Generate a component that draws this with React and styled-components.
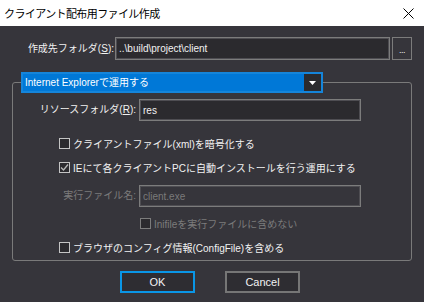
import React from 'react';
import styled, {createGlobalStyle} from 'styled-components';

const FONT = `"Liberation Sans", "Noto Sans CJK JP", sans-serif`;

const GlobalStyle = createGlobalStyle`
    html, body {
        margin: 0;
        padding: 0;
        background: #36353b;
    }
    body {
        font-family: ${FONT};
    }
`

function CheckRow({checked, disabled, indent, children}) {
    return (
        <CheckLine $indent={indent} $disabled={disabled}>
            <Box $disabled={disabled}>
                {checked &&
                    <svg width="9" height="9" viewBox="0 0 9 9">
                        <polyline points="1,4.5 3.5,7 8,1.5" fill="none" stroke="#b8b8b8" strokeWidth="1.3"/>
                    </svg>
                }
            </Box>
            <span>{children}</span>
        </CheckLine>
    )
}

function App() {
    return (
        <Window>
            <GlobalStyle/>
            <TitleBar>
                <Title>クライアント配布用ファイル作成</Title>
                <CloseButton>
                    <svg width="11" height="11" viewBox="0 0 11 11">
                        <path d="M0.5 0.5 L10.5 10.5 M10.5 0.5 L0.5 10.5" stroke="#000" strokeWidth="1"/>
                    </svg>
                </CloseButton>
            </TitleBar>

            <Body>
                <TopRow>
                    <TopLabel>作成先フォルダ(<u>S</u>):</TopLabel>
                    <TextBox value="..\build\project\client" readOnly/>
                    <BrowseButton>...</BrowseButton>
                </TopRow>

                <Group>
                    <Legend>
                        <LegendText>Internet Explorerで運用する</LegendText>
                        <ArrowBox>
                            <svg width="7" height="4" viewBox="0 0 7 4">
                                <polygon points="0,0 7,0 3.5,4" fill="#fff"/>
                            </svg>
                        </ArrowBox>
                    </Legend>

                    <FieldRow $top={6}>
                        <FieldLabel>リソースフォルダ(<u>R</u>):</FieldLabel>
                        <TextBox value="res" readOnly/>
                    </FieldRow>

                    <Checks $top={10}>
                        <CheckRow indent={46}>クライアントファイル(xml)を暗号化する</CheckRow>
                        <CheckRow indent={46} checked>IEにて各クライアントPCに自動インストールを行う運用にする</CheckRow>
                    </Checks>

                    <FieldRow $top={6}>
                        <FieldLabel $disabled>実行ファイル名:</FieldLabel>
                        <TextBox value="client.exe" readOnly disabled/>
                    </FieldRow>

                    <Checks $top={4}>
                        <CheckRow indent={127} disabled>Inifileを実行ファイルに含めない</CheckRow>
                        <CheckRow indent={46}>ブラウザのコンフィグ情報(ConfigFile)を含める</CheckRow>
                    </Checks>
                </Group>

                <Buttons>
                    <DialogButton $primary>OK</DialogButton>
                    <DialogButton>Cancel</DialogButton>
                </Buttons>
            </Body>
        </Window>
    );
}

const Window = styled.div`
    width: 424px;
    height: 302px;
    display: flex;
    flex-direction: column;
    background: #36353b;
    color: #f2f2f2;
    font-size: 10px;
    overflow: hidden;
`

const TitleBar = styled.div`
    height: 26px;
    flex-shrink: 0;
    display: flex;
    align-items: center;
    justify-content: space-between;
    padding-left: 4px;
    background: #ffffff;
    color: #000;
`

const Title = styled.span`
    font-size: 11px;
    letter-spacing: -0.6px;
`

const CloseButton = styled.div`
    width: 32px;
    height: 26px;
    display: flex;
    align-items: center;
    justify-content: center;
`

const Body = styled.div`
    display: flex;
    flex-direction: column;
    padding: 11px 12px 0 12px;
`

const TopRow = styled.div`
    display: flex;
    height: 23px;
    gap: 1px;
`

const TopLabel = styled.label`
    width: 102px;
    text-align: right;
    line-height: 23px;
    white-space: nowrap;
`

const TextBox = styled.input`
    flex: 1;
    min-width: 0;
    box-sizing: border-box;
    height: 100%;
    margin: 0;
    padding: 0 3px;
    border: 1px solid #7c7c7c;
    box-shadow: inset 0 0 0 1px #4e4d52;
    background: ${p => p.disabled ? '#36353b' : '#2b2a2e'};
    color: ${p => p.disabled ? '#7a7a7a' : '#f2f2f2'};
    font-family: ${FONT};
    font-size: 10px;
    outline: none;
`

const BrowseButton = styled.div`
    width: 20px;
    margin-left: 1px;
    box-sizing: border-box;
    border: 1px solid #7c7c7c;
    display: flex;
    align-items: center;
    justify-content: center;
    padding-top: 3px;
    font-size: 9px;
    letter-spacing: -0.5px;
`

const Group = styled.fieldset`
    margin: 12px 0 0 0;
    padding: 0 0 1px 0;
    min-width: 0;
    border: 1px solid #7a7a7a;
    border-radius: 3px;
    display: flex;
    flex-direction: column;
`

const Legend = styled.legend`
    margin-left: 8px;
    padding: 0;
    width: 302px;
    height: 21px;
    box-sizing: border-box;
    display: flex;
    background: #0078d7;
    border: 2px solid #1585da;
`

const LegendText = styled.span`
    flex: 1;
    padding-left: 2px;
    line-height: 17px;
    color: #fff;
`

const ArrowBox = styled.div`
    width: 17px;
    background: #2b2b2e;
    display: flex;
    align-items: center;
    justify-content: center;
`

const FieldRow = styled.div`
    display: grid;
    grid-template-columns: 123px 222px;
    column-gap: 3px;
    height: 22px;
    margin-top: ${p => p.$top}px;
`

const FieldLabel = styled.label`
    text-align: right;
    line-height: 22px;
    white-space: nowrap;
    color: ${p => p.$disabled ? '#7c7c7c' : '#f2f2f2'};
`

const Checks = styled.div`
    display: flex;
    flex-direction: column;
    margin-top: ${p => p.$top}px;
`

const CheckLine = styled.div`
    height: 24px;
    display: flex;
    align-items: center;
    gap: 3px;
    padding-left: ${p => p.$indent}px;
    white-space: nowrap;
    color: ${p => p.$disabled ? '#7c7c7c' : '#f2f2f2'};
`

const Box = styled.span`
    width: 11px;
    height: 11px;
    box-sizing: border-box;
    border: 1px solid ${p => p.$disabled ? '#7c7c7c' : '#c4c4c4'};
    background: #2b2a2e;
    display: flex;
    align-items: center;
    justify-content: center;
`

const Buttons = styled.div`
    display: flex;
    justify-content: center;
    gap: 30px;
    margin-top: 10px;
    padding-right: 4px;
`

const DialogButton = styled.button`
    width: 75px;
    height: 22px;
    margin: 0;
    padding: 0;
    box-sizing: border-box;
    background: #2e2d32;
    border: ${p => p.$primary ? '2px solid #0a96e6' : '2px solid #767676'};
    color: #f2f2f2;
    font-family: ${FONT};
    font-size: 11px;
`

export default App;
